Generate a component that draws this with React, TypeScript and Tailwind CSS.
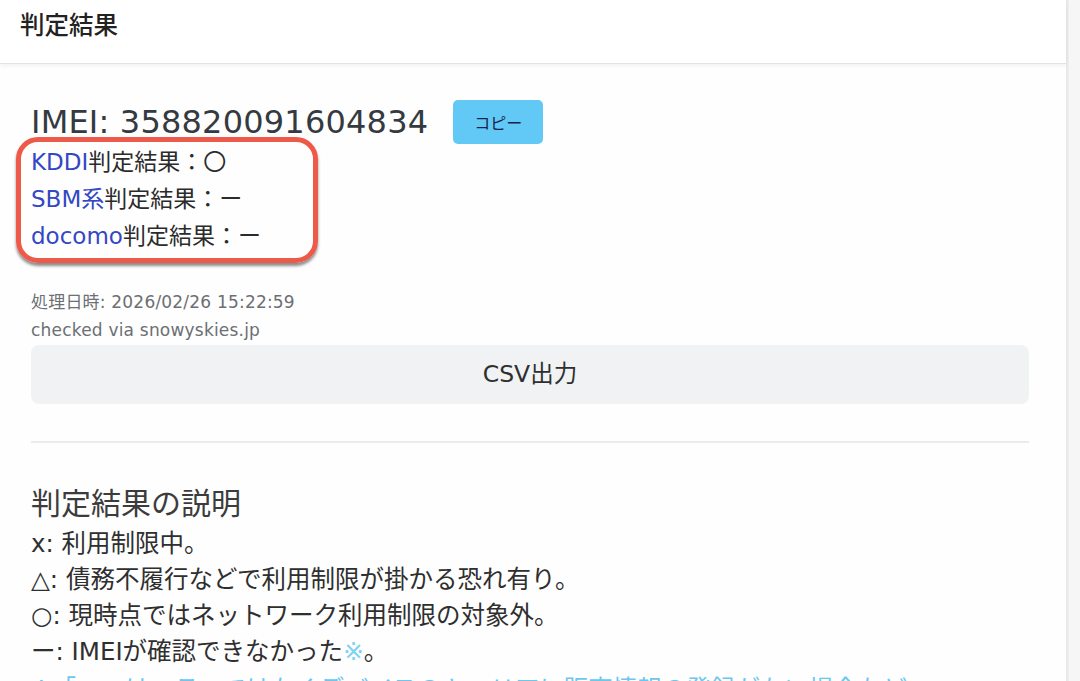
import React from "react";

const FONT = "font-['DejaVu_Sans','Noto_Sans_CJK_JP',sans-serif]";

export default function App() {
  return (
    <div className={`flex w-[1080px] min-h-[681px] bg-[#f7f7f7] ${FONT}`}>
      <div className="flex-1 flex flex-col border-r-2 border-[#e9e9e9] bg-[#fefefe]">
        <header className="h-[64px] bg-white border-b border-[#e3e3e3] shadow-[0_2px_4px_rgba(0,0,0,0.05)] flex items-center pl-[20px] pb-[14px]">
          <h1 className="text-[24.5px] font-medium text-[#222] font-['Noto_Sans_CJK_JP',sans-serif]">判定結果</h1>
        </header>

        <main className="pl-[31px] pr-[37px] pt-[36px]">
          <div className="flex items-center h-[44px]">
            <span className="text-[32px] text-[#343a40] leading-none tracking-[0.2px]">IMEI: 358820091604834</span>
            <button className="ml-[25px] w-[90px] h-[44px] rounded-[5px] bg-[#62c9f6] text-[16px] text-[#14244a] font-['Noto_Sans_CJK_JP',sans-serif]">
              コピー
            </button>
          </div>

          <div className="relative text-[23px] leading-[37px] text-[#2b2b2b]">
            <div className="absolute left-[-15px] top-[-7px] w-[302px] h-[126px] rounded-[22px] border-[5px] border-[#ee5a4a] shadow-[0_3px_3px_rgba(0,0,0,0.45)]" />
            <div>
              <span className="text-[#3447c4]">KDDI</span>判定結果：〇
            </div>
            <div>
              <span className="text-[#3447c4]">SBM系</span>判定結果：ー
            </div>
            <div>
              <span className="text-[#3447c4]">docomo</span>判定結果：ー
            </div>
          </div>

          <div className="mt-[33px] text-[17px] leading-[28px] text-[#6c6f74] tracking-[0.2px]">
            <div>処理日時: 2026/02/26 15:22:59</div>
            <div>checked via snowyskies.jp</div>
          </div>

          <button className="mt-[1px] w-full h-[59px] rounded-[8px] bg-[#f1f2f4] text-[23.5px] text-[#2f2f2f] flex items-center justify-center">
            CSV出力
          </button>

          <div className="mt-[37px] h-[2px] bg-[#ececee]" />

          <h2 className="mt-[37px] text-[30px] leading-[42px] text-[#3c3c3c] font-['Noto_Sans_CJK_JP',sans-serif]">判定結果の説明</h2>
          <div className="mt-[4px] text-[24.5px] leading-[36px] text-[#2f2f2f]">
            <div>x: 利用制限中。</div>
            <div>△: 債務不履行などで利用制限が掛かる恐れ有り。</div>
            <div>○: 現時点ではネットワーク利用制限の対象外。</div>
            <div>
              ー: IMEIが確認できなかった<span className="text-[#7fd2f2]">※</span>。
            </div>
            <div className="mt-[2px] text-[#6cc6ee]">※「ー」はエラーではなくデバイスのキャリアに販売情報の登録がない場合など</div>
          </div>
        </main>
      </div>
      <div className="w-[12px] bg-[#f6f6f6] border-l border-[#efefef]" />
    </div>
  );
}
